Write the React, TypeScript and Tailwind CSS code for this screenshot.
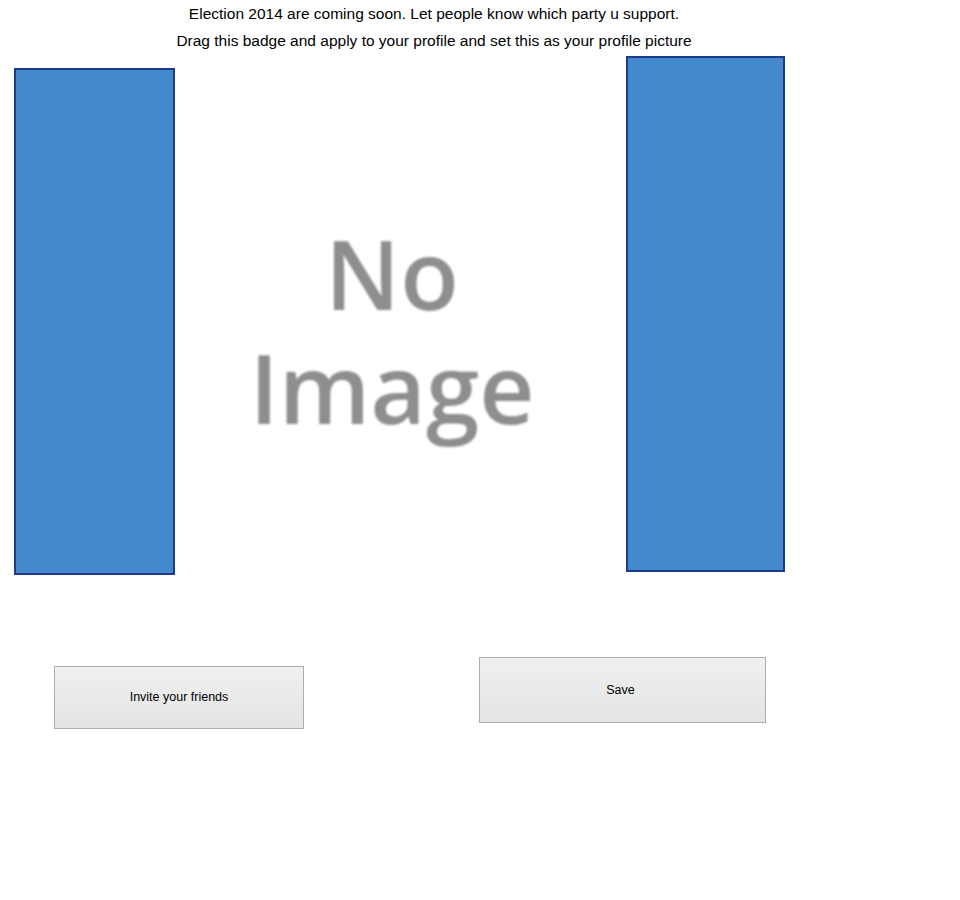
export default function App() {
  return (
    <div className="min-h-[900px] w-[960px] bg-white font-['Liberation_Sans',Arial,sans-serif] text-black">
      {/* header copy */}
      <div className="w-[868px] text-center text-[15.5px] leading-[27px]">
        <p>Election 2014 are coming soon. Let people know which party u support.</p>
        <p>Drag this badge and apply to your profile and set this as your profile picture</p>
      </div>

      {/* badges + placeholder */}
      <div className="mt-[2px] flex items-start">
        <div className="ml-[14px] mt-[12px] h-[507px] w-[161px] border-2 border-[#1d3a8c] bg-[#4489cc]" />
        <div className="w-[451px] pr-[17px] pt-[160px] text-center">
          <div className="select-none font-['Open_Sans',sans-serif] text-[96px] font-semibold leading-[114px] text-[#8e8e8e] blur-[1.2px]">
            <div>No</div>
            <div>Image</div>
          </div>
        </div>
        <div className="h-[516px] w-[159px] border-2 border-[#1d3a8c] bg-[#4489cc]" />
      </div>

      {/* actions */}
      <div className="flex items-start">
        <button className="ml-[54px] mt-[91px] h-[63px] w-[250px] border border-[#adadad] bg-gradient-to-b from-[#f0f0f0] to-[#e4e4e4] text-[12.5px] text-black">
          Invite your friends
        </button>
        <button className="ml-[175px] mt-[82px] h-[66px] w-[287px] border border-[#adadad] bg-gradient-to-b from-[#f0f0f0] to-[#e4e4e4] pr-[4px] text-[12.5px] text-black">
          Save
        </button>
      </div>
    </div>
  );
}
